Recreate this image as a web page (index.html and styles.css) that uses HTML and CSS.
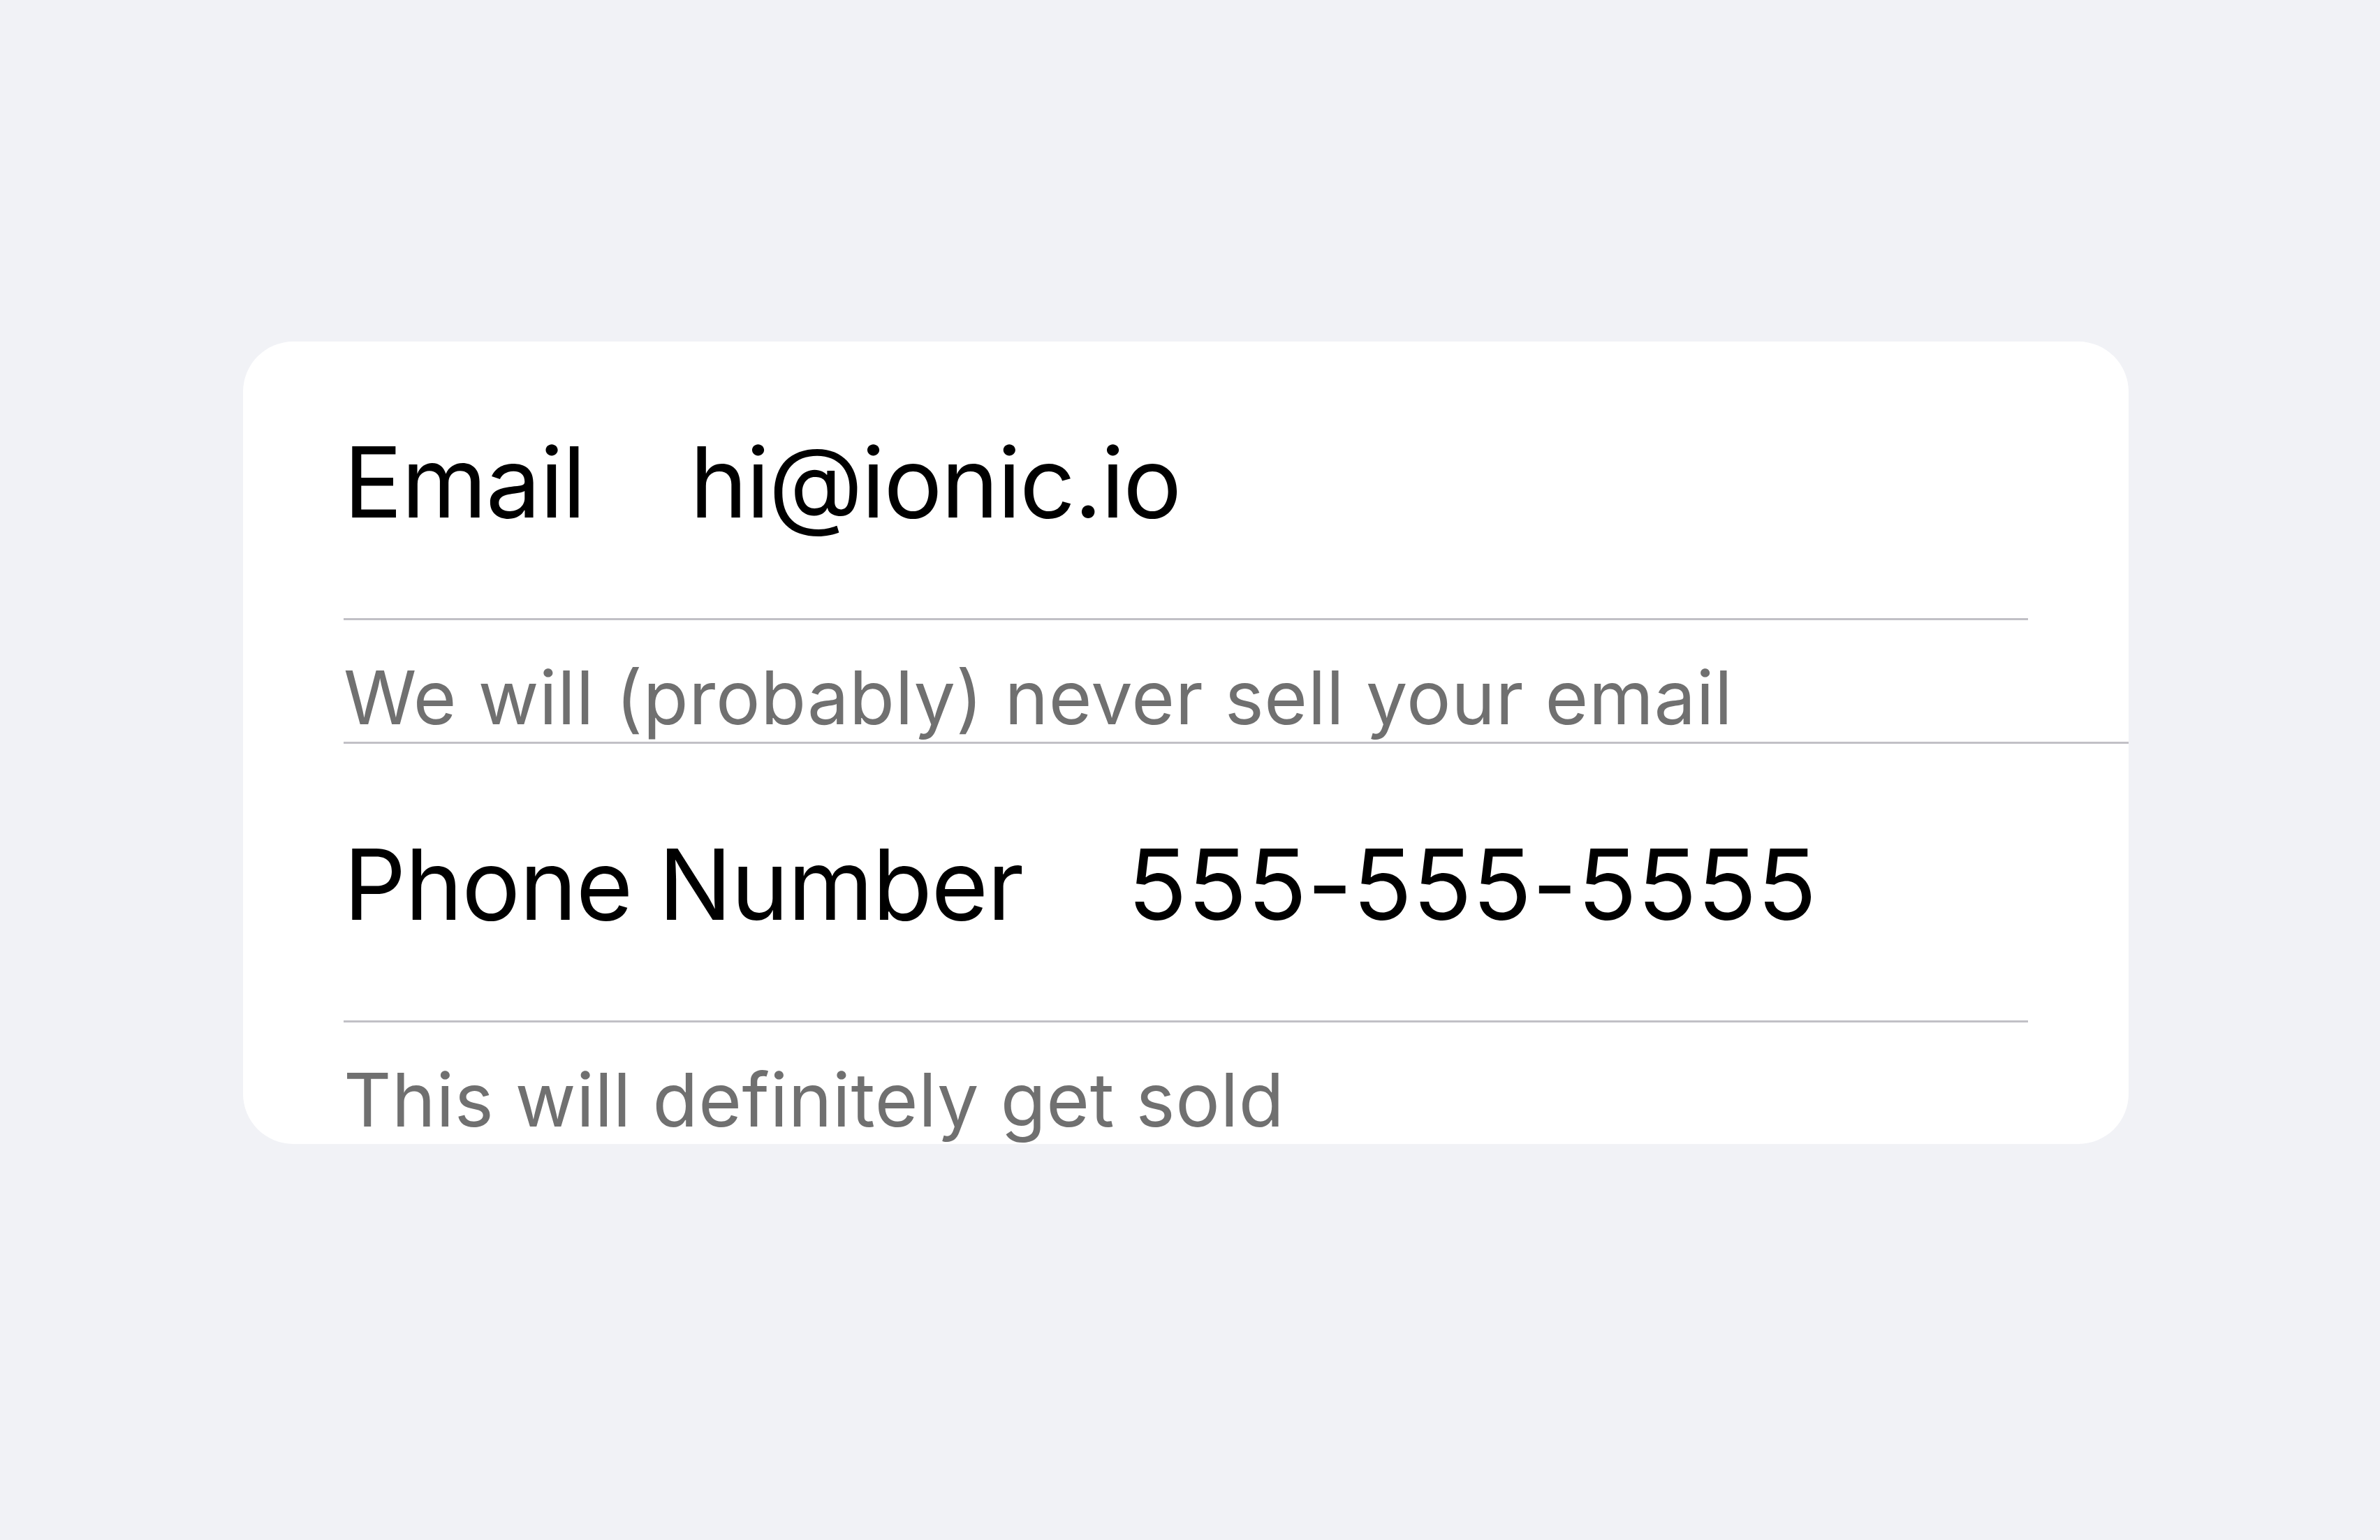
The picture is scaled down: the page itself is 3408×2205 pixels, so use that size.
FILE: index.html
```html
<!DOCTYPE html>
<html lang="en">
<head>
<meta charset="utf-8">
<title>Inputs with helper text</title>
<link rel="stylesheet" href="styles.css">
</head>
<body>
<main class="page">
  <section class="card">
    <div class="item item-divided">
      <div class="field">
        <span class="label">Email</span>
        <span class="value value-text">hi@ionic.io</span>
      </div>
      <div class="helper">We will (probably) never sell your email</div>
    </div>
    <div class="item">
      <div class="field">
        <span class="label">Phone Number</span>
        <span class="value value-digits">555-555-5555</span>
      </div>
      <div class="helper">This will definitely get sold</div>
    </div>
  </section>
</main>
</body>
</html>
```

FILE: styles.css
```css
html, body {
  margin: 0;
  padding: 0;
}

body {
  background: #f1f2f6;
  font-family: Inter, "Noto Sans", "Liberation Sans", sans-serif;
  width: 3408px;
  height: 2205px;
  overflow: hidden;
}

.page {
  padding-top: 489px;
  padding-left: 348px;
}

.card {
  width: 2700px;
  background: #ffffff;
  border-radius: 72px;
  overflow: hidden;
}

.item {
  margin-left: 144px;
}

.item-divided {
  border-bottom: 3px solid #c1c0c6;
}

.field {
  display: flex;
  align-items: baseline;
  gap: 150px;
  height: 393px;
  line-height: 396px;
  padding-top: 3px;
  margin-right: 144px;
  border-bottom: 3px solid #c1c0c6;
  font-size: 140px;
  color: #000000;
}

.label {
  letter-spacing: -1.5px;
}

.value-text {
  letter-spacing: -2px;
}

.value-digits {
  letter-spacing: 0.6px;
}

.helper {
  box-sizing: border-box;
  height: 174px;
  padding-top: 47px;
  line-height: 127px;
  font-size: 106px;
  letter-spacing: 0.65px;
  color: #707070;
  white-space: nowrap;
}
```
